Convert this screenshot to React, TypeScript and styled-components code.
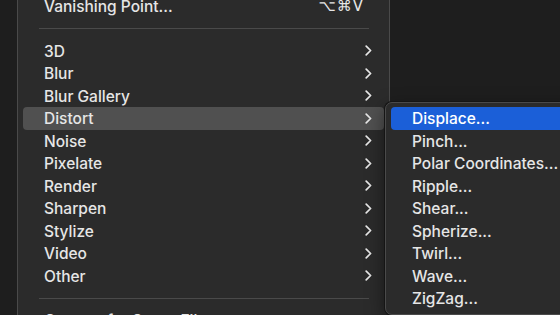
import React from 'react'
import styled, { createGlobalStyle } from 'styled-components'

const GlobalStyle = createGlobalStyle`
    html, body {
        margin: 0;
        padding: 0;
        background: #1e1e1e;
        overflow: hidden;
    }
    * {
        box-sizing: border-box;
    }
`

type Item = { label: string; submenu?: boolean; active?: boolean }

const groups: Item[][] = [
    [{ label: 'Vanishing Point...' }],
    [
        { label: '3D', submenu: true },
        { label: 'Blur', submenu: true },
        { label: 'Blur Gallery', submenu: true },
        { label: 'Distort', submenu: true, active: true },
        { label: 'Noise', submenu: true },
        { label: 'Pixelate', submenu: true },
        { label: 'Render', submenu: true },
        { label: 'Sharpen', submenu: true },
        { label: 'Stylize', submenu: true },
        { label: 'Video', submenu: true },
        { label: 'Other', submenu: true },
    ],
    [{ label: 'Convert for Smart Filters' }],
]

const distortItems = [
    'Displace...',
    'Pinch...',
    'Polar Coordinates...',
    'Ripple...',
    'Shear...',
    'Spherize...',
    'Twirl...',
    'Wave...',
    'ZigZag...',
]

const Chevron = () => (
    <svg width="7" height="11" viewBox="0 0 7 11">
        <polyline
            points="1.2,1.2 5.6,5.5 1.2,9.8"
            fill="none"
            stroke="#e6e6e6"
            strokeWidth="1.7"
            strokeLinecap="round"
            strokeLinejoin="round"
        />
    </svg>
)

export default function App() {
    return (
        <Stage>
            <GlobalStyle />
            <MainMenu>
                {groups.map((group, gi) => (
                    <React.Fragment key={gi}>
                        {gi > 0 && <Separator />}
                        {group.map((item) => (
                            <Row key={item.label} $tone={item.active ? 'gray' : undefined}>
                                <Label>{item.label}</Label>
                                {item.submenu && <Chevron />}
                                {item.label === 'Vanishing Point...' && (
                                    <Shortcut>⌥⌘V</Shortcut>
                                )}
                            </Row>
                        ))}
                    </React.Fragment>
                ))}
            </MainMenu>
            <SubMenu>
                {distortItems.map((label, i) => (
                    <Row key={label} $tone={i === 0 ? 'blue' : undefined}>
                        <Label>{label}</Label>
                    </Row>
                ))}
            </SubMenu>
        </Stage>
    )
}

const Stage = styled.div`
    position: relative;
    width: 560px;
    height: 315px;
    overflow: hidden;
    padding-left: 17px;
    font-family: Inter, 'DejaVu Sans', sans-serif;
    font-size: 15.5px;
    font-weight: 500;
    color: #e6e6e6;
`
const MainMenu = styled.div`
    width: 373px;
    margin-top: -11px;
    padding: 5px;
    background: #2b2b2b;
    border: 1px solid #4a4a4a;
    border-radius: 7px;
    display: flex;
    flex-direction: column;
`
const SubMenu = styled.div`
    position: absolute;
    left: 385px;
    top: 102px;
    width: 200px;
    padding: 4px 5px;
    background: #2b2b2b;
    border: 1px solid #4a4a4a;
    border-radius: 7px;
    box-shadow: 0 0 0 1px #151515, 0 6px 18px rgba(0, 0, 0, 0.5);
    display: flex;
    flex-direction: column;
`
const Row = styled.div<{ $tone?: 'gray' | 'blue' }>`
    height: 22.5px;
    display: flex;
    align-items: center;
    justify-content: space-between;
    padding: 0 12px 0 21px;
    border-radius: 4px;
    white-space: nowrap;
    background: ${(p) =>
        p.$tone === 'blue' ? '#1b5fd8' : p.$tone === 'gray' ? '#505050' : 'transparent'};
    color: ${(p) => (p.$tone === 'blue' ? '#ffffff' : '#e6e6e6')};
`
const Label = styled.span`
    line-height: 1;
    padding-top: 1px;
`
const Shortcut = styled.span`
    font-family: 'DejaVu Sans', sans-serif;
    font-size: 15px;
    letter-spacing: 1px;
    margin-right: 8px;
`
const Separator = styled.div`
    height: 1px;
    margin: 10.5px 15px 10.5px 16px;
    background: #4a4a4a;
`
